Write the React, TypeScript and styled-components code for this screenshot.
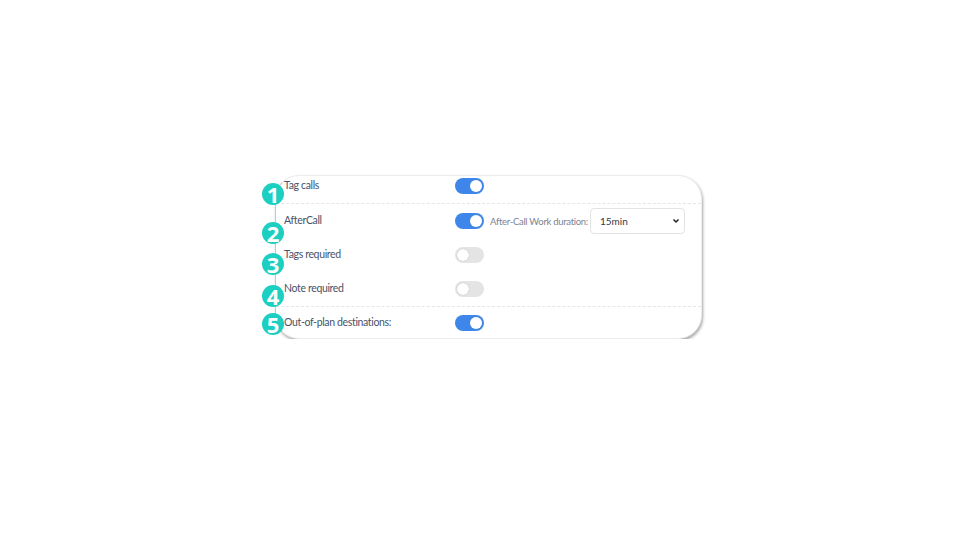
import React, { useState } from 'react';
import styled, { createGlobalStyle, css } from 'styled-components';

const GlobalStyle = createGlobalStyle`
  html, body {
    margin: 0;
    padding: 0;
    background: #ffffff;
    font-family: Lato, 'Open Sans', 'Liberation Sans', sans-serif;
  }
`;

interface RowConfig {
  id: string;
  label: string;
  on: boolean;
  duration?: boolean;
}

const sections: RowConfig[][] = [
  [{ id: 'tag', label: 'Tag calls', on: true }],
  [
    { id: 'after', label: 'AfterCall', on: true, duration: true },
    { id: 'tagsReq', label: 'Tags required', on: false },
    { id: 'noteReq', label: 'Note required', on: false },
  ],
  [{ id: 'oop', label: 'Out-of-plan destinations:', on: true }],
];

const badgeTops = [7, 46, 77, 109, 137];

export default function App() {
  const [state, setState] = useState<Record<string, boolean>>(() => {
    const init: Record<string, boolean> = {};
    sections.flat().forEach((r) => (init[r.id] = r.on));
    return init;
  });
  const [duration, setDuration] = useState('15min');

  const toggle = (id: string) => setState((s) => ({ ...s, [id]: !s[id] }));

  return (
    <Page>
      <GlobalStyle />
      <Card>
        {badgeTops.map((top, i) => (
          <Badge key={i} style={{ top }}>
            {i + 1}
          </Badge>
        ))}
        {sections.map((rows, si) => (
          <Section key={si} $index={si} $last={si === sections.length - 1}>
            {rows.map((row) => (
              <Row key={row.id} $compact={si !== 1}>
                <Label>{row.label}</Label>
                <Switch
                  type="button"
                  $on={state[row.id]}
                  onClick={() => toggle(row.id)}
                  aria-pressed={state[row.id]}
                >
                  <Knob $on={state[row.id]} />
                </Switch>
                {row.duration && (
                  <Duration>
                    <DurationLabel>After-Call Work duration:</DurationLabel>
                    <SelectBox>
                      <Select value={duration} onChange={(e) => setDuration(e.target.value)}>
                        <option>5min</option>
                        <option>10min</option>
                        <option>15min</option>
                        <option>30min</option>
                      </Select>
                      <Chevron viewBox="0 0 10 10">
                        <path d="M2.5 3.5 L5 6 L7.5 3.5" fill="none" stroke="#222" strokeWidth="1.5" />
                      </Chevron>
                    </SelectBox>
                  </Duration>
                )}
              </Row>
            ))}
          </Section>
        ))}
      </Card>
    </Page>
  );
}

const Page = styled.div`
  padding: 175px 0 0 275px;
`;

const Card = styled.div`
  position: relative;
  width: 427px;
  box-sizing: border-box;
  background: #fff;
  border: 1px solid #ececec;
  border-left-color: #c9c9c9;
  border-radius: 24px;
  box-shadow: 1px 2px 3px rgba(0, 0, 0, 0.35);
`;

const Badge = styled.div`
  position: absolute;
  left: -14px;
  width: 22px;
  height: 22px;
  border-radius: 50%;
  background: #1ccfc0;
  color: #fff;
  font-family: 'Open Sans', 'Liberation Sans', sans-serif;
  font-weight: 700;
  font-size: 22px;
  line-height: 22px;
  text-align: center;
  z-index: 2;
`;

const Section = styled.div<{ $index: number; $last: boolean }>`
  ${({ $index }) =>
    $index === 0 &&
    css`
      padding: 0 0 7px;
    `}
  ${({ $index }) =>
    $index === 2 &&
    css`
      padding: 6px 0 5px;
    `}
  ${({ $last }) =>
    !$last &&
    css`
      border-bottom: 1px dashed #e6e6e6;
    `}
`;

const Row = styled.div<{ $compact: boolean }>`
  display: flex;
  align-items: center;
  height: ${({ $compact }) => ($compact ? '20px' : '34px')};
  padding-left: 8px;
`;

const Label = styled.span`
  width: 171px;
  flex-shrink: 0;
  margin-top: -2px;
  font-size: 10.5px;
  letter-spacing: -0.35px;
  color: #485268;
`;

const Switch = styled.button<{ $on: boolean }>`
  position: relative;
  width: 29px;
  height: 16px;
  padding: 0;
  border: none;
  border-radius: 8px;
  background: ${({ $on }) => ($on ? '#3f86ea' : '#e4e4e4')};
  cursor: pointer;
  flex-shrink: 0;
`;

const Knob = styled.span<{ $on: boolean }>`
  position: absolute;
  top: 2px;
  left: ${({ $on }) => ($on ? '15px' : '2px')};
  width: 12px;
  height: 12px;
  border-radius: 50%;
  background: #fff;
  box-shadow: ${({ $on }) => ($on ? 'none' : '0 0 1px rgba(0,0,0,0.3)')};
`;

const Duration = styled.div`
  display: flex;
  align-items: center;
  margin-left: 6px;
`;

const DurationLabel = styled.span`
  width: 100px;
  font-size: 9.5px;
  letter-spacing: -0.3px;
  color: #7d8392;
  white-space: nowrap;
`;

const SelectBox = styled.div`
  position: relative;
  width: 95px;
  height: 26px;
`;

const Select = styled.select`
  appearance: none;
  width: 100%;
  height: 100%;
  box-sizing: border-box;
  border: 1px solid #e3e3e3;
  border-radius: 4px;
  background: #fff;
  padding: 0 0 0 9px;
  font-family: Lato, 'Open Sans', 'Liberation Sans', sans-serif;
  font-size: 10px;
  color: #333a48;
  outline: none;
`;

const Chevron = styled.svg`
  position: absolute;
  right: 4px;
  top: 8px;
  width: 10px;
  height: 10px;
  pointer-events: none;
`;
